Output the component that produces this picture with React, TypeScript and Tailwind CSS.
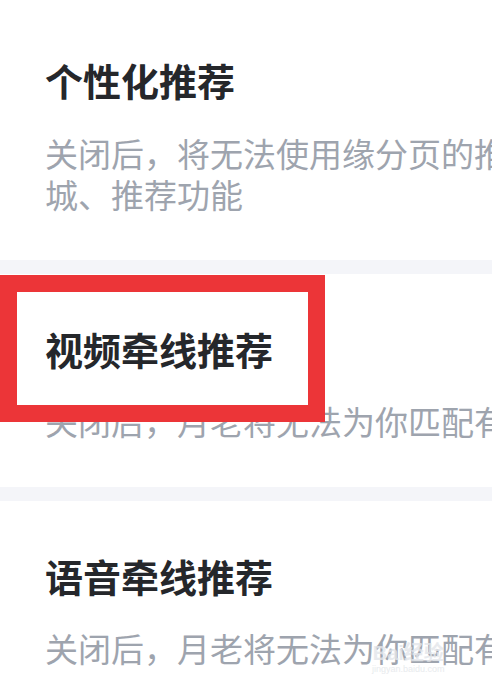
export default function App() {
  const font = { fontFamily: '"Noto Sans CJK SC", "Noto Sans", sans-serif' };
  return (
    <div className="w-[492px] h-[685px] overflow-hidden bg-white relative" style={font}>
      <div className="w-[640px]">
        <section className="pt-[57px] pb-[45px] px-[45px]">
          <h2 className="text-[38px] leading-[46px] font-bold text-[#25272b] whitespace-nowrap">个性化推荐</h2>
          <p className="mt-[30px] w-[535px] text-[33px] leading-[41px] text-[#9ea4ae]">关闭后，将无法使用缘分页的推荐同城、推荐功能</p>
        </section>
        <div className="h-[14px] bg-[#f4f5f9]" />
        <section className="relative pt-[52px] pb-[45px] px-[45px]">
          <h2 className="text-[38px] leading-[46px] font-bold text-[#25272b] whitespace-nowrap">视频牵线推荐</h2>
          <p className="mt-[29px] w-[535px] text-[33px] leading-[41px] text-[#9ea4ae] whitespace-nowrap">关闭后，月老将无法为你匹配有缘人</p>
          <div className="absolute left-0 top-[1px] w-[325px] h-[147px] border-[17px] border-[#ec3538]" />
        </section>
        <div className="h-[14px] bg-[#f4f5f9]" />
        <section className="relative pt-[52px] pb-[45px] px-[45px]">
          <h2 className="text-[38px] leading-[46px] font-bold text-[#25272b] whitespace-nowrap">语音牵线推荐</h2>
          <p className="mt-[29px] w-[535px] text-[33px] leading-[41px] text-[#9ea4ae] whitespace-nowrap">关闭后，月老将无法为你匹配有缘人</p>
        </section>
      </div>
      <div className="absolute left-[372px] top-[642px] flex flex-col items-center text-[#e3e6ea] opacity-80 pointer-events-none">
        <span className="text-[20px] leading-[22px] font-bold" style={{ fontFamily: '"Liberation Sans", "Noto Sans CJK SC", sans-serif' }}>Bai经验</span>
        <span className="text-[9px] leading-[10px]" style={{ fontFamily: '"Liberation Sans", sans-serif' }}>jingyan.baidu.com</span>
      </div>
    </div>
  );
}
